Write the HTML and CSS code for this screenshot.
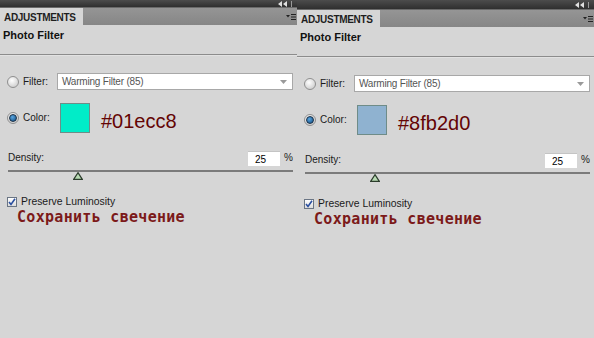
FILE: index.html
```html
<!DOCTYPE html>
<html lang="en">
<head>
  <meta charset="UTF-8">
  <title>Photo Filter</title>
  <link rel="stylesheet" href="styles.css">
</head>
<body>
<div class="shots">

  <div class="panel">
    <div class="topbar">
      <svg class="collapse" width="9" height="6" viewBox="0 0 9 6"><path d="M4 0 L0 3 L4 6 Z M9 0 L5 3 L9 6 Z" fill="#e0e0e0"/></svg>
      <span class="topbar-sep"></span>
    </div>
    <div class="tabs">
      <div class="tab">ADJUSTMENTS</div>
      <svg class="menu" width="10" height="8" viewBox="0 0 10 8"><path d="M0 2 L4 2 L2 4.5 Z" fill="#222"/><path d="M5 1.5 H10 M5 4 H10 M5 6.5 H10" stroke="#222" stroke-width="1"/></svg>
    </div>
    <div class="content">
      <div class="title">Photo Filter</div>
      <div class="sep"></div>
      <div class="row filter-row">
        <span class="radio"></span>
        <span class="label">Filter:</span>
        <div class="select">
          <span>Warming Filter (85)</span>
          <svg width="7" height="4" viewBox="0 0 7 4"><path d="M0 0 H7 L3.5 4 Z" fill="#9a9a9a"/></svg>
        </div>
      </div>
      <div class="row color-row">
        <span class="radio radio--on"></span>
        <span class="label">Color:</span>
        <span class="swatch" style="background:#01ecc8"></span>
        <span class="hex">#01ecc8</span>
      </div>
      <div class="density">
        <span class="label">Density:</span>
        <span class="num">25</span>
        <span class="pct">%</span>
      </div>
      <div class="track">
        <svg class="thumb" width="10" height="8" viewBox="0 0 10 8"><path d="M5 0.7 L9.3 7.3 H0.7 Z" fill="#b9dcb4" stroke="#2c3d2c" stroke-width="1.2"/></svg>
      </div>
      <div class="check-row">
        <span class="check"><svg width="8" height="8" viewBox="0 0 8 8"><path d="M1 4 L3 6.5 L7 0.8" fill="none" stroke="#2a4fa0" stroke-width="1.6"/></svg></span>
        <span class="label">Preserve Luminosity</span>
      </div>
      <div class="note">Сохранить свечение</div>
    </div>
  </div>

  <div class="panel panel--low">
    <div class="topbar">
      <svg class="collapse" width="9" height="6" viewBox="0 0 9 6"><path d="M4 0 L0 3 L4 6 Z M9 0 L5 3 L9 6 Z" fill="#e0e0e0"/></svg>
      <span class="topbar-sep"></span>
    </div>
    <div class="tabs">
      <div class="tab">ADJUSTMENTS</div>
      <svg class="menu" width="10" height="8" viewBox="0 0 10 8"><path d="M0 2 L4 2 L2 4.5 Z" fill="#222"/><path d="M5 1.5 H10 M5 4 H10 M5 6.5 H10" stroke="#222" stroke-width="1"/></svg>
    </div>
    <div class="content">
      <div class="title">Photo Filter</div>
      <div class="sep"></div>
      <div class="row filter-row">
        <span class="radio"></span>
        <span class="label">Filter:</span>
        <div class="select">
          <span>Warming Filter (85)</span>
          <svg width="7" height="4" viewBox="0 0 7 4"><path d="M0 0 H7 L3.5 4 Z" fill="#9a9a9a"/></svg>
        </div>
      </div>
      <div class="row color-row">
        <span class="radio radio--on"></span>
        <span class="label">Color:</span>
        <span class="swatch" style="background:#8fb2d0"></span>
        <span class="hex">#8fb2d0</span>
      </div>
      <div class="density">
        <span class="label">Density:</span>
        <span class="num">25</span>
        <span class="pct">%</span>
      </div>
      <div class="track">
        <svg class="thumb" width="10" height="8" viewBox="0 0 10 8"><path d="M5 0.7 L9.3 7.3 H0.7 Z" fill="#b9dcb4" stroke="#2c3d2c" stroke-width="1.2"/></svg>
      </div>
      <div class="check-row">
        <span class="check"><svg width="8" height="8" viewBox="0 0 8 8"><path d="M1 4 L3 6.5 L7 0.8" fill="none" stroke="#2a4fa0" stroke-width="1.6"/></svg></span>
        <span class="label">Preserve Luminosity</span>
      </div>
      <div class="note">Сохранить свечение</div>
    </div>
  </div>

</div>
</body>
</html>
```

FILE: styles.css
```css
* {
  box-sizing: border-box;
}
body {
  margin: 0;
  background: #d6d6d6;
  font-family: "Liberation Sans", Arial, sans-serif;
  font-size: 10px;
  color: #1a1a1a;
}
.shots {
  display: grid;
  grid-template-columns: 297px 297px;
  height: 338px;
}
.panel {
  background: #d6d6d6;
}

/* dark strip with collapse arrows */
.topbar {
  height: 7px;
  background: linear-gradient(#4c4c4c, #2f2f2f);
  display: flex;
  justify-content: flex-end;
  align-items: center;
  padding-right: 3px;
}
.panel--low .topbar {
  height: 9px;
}
.collapse {
  margin-right: 4px;
}
.topbar-sep {
  width: 1px;
  height: 6px;
  background: #9a9a9a;
  margin-right: 2px;
}

.tabs {
  height: 18px;
  background: linear-gradient(#959595, #868686);
  border-top: 1px solid #6a6a6a;
  display: flex;
  align-items: stretch;
  justify-content: space-between;
}
.tab {
  width: 83px;
  background: #d6d6d6;
  font-weight: bold;
  font-size: 10px;
  letter-spacing: -0.3px;
  color: #1e1e1e;
  padding: 4px 0 0 4px;
}
.menu {
  align-self: center;
  margin-right: 1px;
}

.content {
  padding: 0 4px 0 7px;
}
.title {
  font-size: 11px;
  font-weight: bold;
  line-height: 14px;
  margin: 3px 0 0 -4px;
  color: #111;
}
.sep {
  margin: 12px -4px 0 -7px;
  border-top: 1px solid #8c8c8c;
  border-bottom: 1px solid #e2e2e2;
}

.row {
  display: flex;
  align-items: center;
}
.filter-row {
  margin-top: 17px;
  height: 17px;
}
.color-row {
  margin-top: 13px;
  height: 30px;
}
.radio {
  width: 12px;
  height: 12px;
  border-radius: 50%;
  border: 1px solid #8f8f8f;
  background: radial-gradient(circle at 40% 35%, #ffffff, #d4d4d4 70%);
  display: flex;
  align-items: center;
  justify-content: center;
}
.radio--on::after {
  content: "";
  width: 6px;
  height: 6px;
  border-radius: 50%;
  background: radial-gradient(circle at 40% 35%, #5aa6e0, #0e4a80);
  border: 1px solid #1b2f45;
}
.label {
  margin-left: 4px;
  width: 34px;
  line-height: 12px;
}
.select {
  width: 236px;
  height: 17px;
  background: #fff;
  border: 1px solid #a8a8a8;
  display: flex;
  align-items: center;
  justify-content: space-between;
  padding: 0 5px 0 4px;
  color: #555;
  letter-spacing: -0.2px;
}
.swatch {
  width: 30px;
  height: 30px;
  margin-left: 3px;
  border: 1px solid #6f8c88;
}
.hex {
  margin-left: 11px;
  padding-top: 6px;
  font-size: 20px;
  line-height: 20px;
  color: #640404;
}

.density {
  margin-top: 18px;
  height: 15px;
  display: flex;
  align-items: flex-start;
  padding-left: 1px;
}
.density .label {
  margin: 1px 0 0 0;
  width: auto;
  flex: 1;
}
.num {
  width: 32px;
  height: 15px;
  background: #fff;
  border-top: 1px solid #c4c4c4;
  padding: 2px 0 0 7px;
  font-size: 10px;
  color: #000;
}
.pct {
  margin: 1px 0 0 4px;
  width: 9px;
  line-height: 12px;
}

.track {
  position: relative;
  margin: 4px 0 0 1px;
  height: 2px;
  background: #7b7b7b;
}
.thumb {
  position: absolute;
  left: 65px;
  top: 2px;
}

.check-row {
  margin-top: 24px;
  height: 12px;
  display: flex;
  align-items: center;
}
.check {
  width: 10px;
  height: 10px;
  border: 1px solid #6a7584;
  background: linear-gradient(#ffffff, #dcdcdc);
  display: flex;
  align-items: center;
  justify-content: center;
}
.check-row .label {
  width: auto;
  font-size: 10.4px;
}
.note {
  margin-left: 10px;
  font-family: "DejaVu Sans Mono", monospace;
  font-weight: bold;
  font-size: 15px;
  line-height: 18px;
  letter-spacing: 0.3px;
  color: #7c1a1a;
}
```
